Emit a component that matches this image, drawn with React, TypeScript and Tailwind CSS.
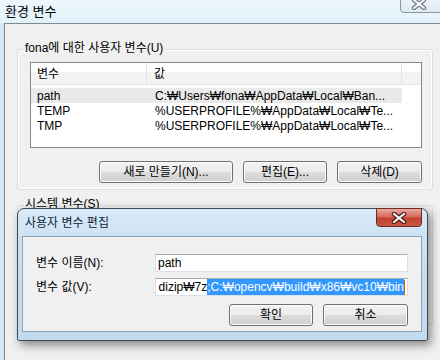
import React from 'react';

const btn =
  'flex items-center justify-center h-[22px] rounded-[3px] border border-[#707070] bg-[linear-gradient(to_bottom,#f2f2f2_0%,#ebebeb_50%,#dddddd_50%,#cfcfcf_100%)] shadow-[inset_0_0_0_1px_#fcfcfc]';

const rows = [
  { name: 'path', value: 'C:₩Users₩fona₩AppData₩Local₩Ban...', selected: true },
  { name: 'TEMP', value: '%USERPROFILE%₩AppData₩Local₩Te...', selected: false },
  { name: 'TMP', value: '%USERPROFILE%₩AppData₩Local₩Te...', selected: false },
];

const CloseX: React.FC<{ outline: string; fill: string }> = ({ outline, fill }) => (
  <svg width="16" height="12" viewBox="0 0 16 12">
    <path d="M3 2 L13 10 M13 2 L3 10" stroke={outline} strokeWidth="4.5" strokeLinecap="round" fill="none" />
    <path d="M3 2 L13 10 M13 2 L3 10" stroke={fill} strokeWidth="2.2" strokeLinecap="round" fill="none" />
  </svg>
);

const App: React.FC = () => {
  return (
    <div className="relative w-[440px] h-[360px] overflow-hidden bg-[#d6e9f6] text-[12px] leading-[16px] text-black font-['Liberation_Sans','Noto_Sans_CJK_KR',sans-serif]">
      {/* main window title */}
      <div className="h-[23px] pl-[5px] flex items-center bg-[linear-gradient(to_bottom,#eef8fd,#e2f1fa)] text-[13px]">
        환경 변수
      </div>
      <div className="absolute left-[400px] top-[-8px] w-[50px] h-[21px] rounded-bl-[4px] border border-[#8797a6] bg-[linear-gradient(to_bottom,#f4f8fb,#dfe9f1)] flex items-end justify-center pb-[2px] pr-[12px]">
        <CloseX outline="#6b7683" fill="#f4f6f8" />
      </div>

      {/* main window client */}
      <div className="ml-[4px] h-[337px] border-l border-t border-[#7d8a96] bg-[#f0f0f0]">
        {/* user variables group */}
        <div className="relative mt-[25px] ml-[12px] w-[416px] h-[141px] rounded-[3px] border border-[#d5dfe5] shadow-[inset_0_0_0_1px_#ffffff]">
          <div className="absolute left-[6px] top-[-10px] px-[1px] bg-[#f0f0f0]">fona에 대한 사용자 변수(U)</div>

          <div className="ml-[12px] mt-[12px] w-[392px] h-[86px] border border-[#828790] bg-white">
            <div className="flex h-[22px] border-b border-[#e5e5e5] bg-[linear-gradient(to_bottom,#ffffff_0%,#ffffff_45%,#f2f3f4_45%,#f2f3f4_100%)]">
              <div className="w-[116px] pl-[6px] flex items-center border-r border-[#e3e3e3]">변수</div>
              <div className="w-[255px] pl-[7px] flex items-center border-r border-[#e3e3e3]">값</div>
              <div className="flex-1" />
            </div>
            <div className="pt-[3px]">
              {rows.map((r) => (
                <div
                  key={r.name}
                  className={`flex h-[15px] w-[371px] items-center ${r.selected ? 'bg-[#eaeaea]' : ''}`}
                >
                  <div className="w-[117px] pl-[6px]">{r.name}</div>
                  <div className="pl-[7px] whitespace-nowrap">{r.value}</div>
                </div>
              ))}
            </div>
          </div>

          <div className="mt-[13px] mr-[10px] flex justify-end gap-[10px]">
            <div className={`${btn} w-[134px]`}>새로 만들기(N)...</div>
            <div className={`${btn} w-[84px]`}>편집(E)...</div>
            <div className={`${btn} w-[85px]`}>삭제(D)</div>
          </div>
        </div>

        {/* system variables group (covered) */}
        <div className="relative mt-[15px] ml-[12px] w-[416px] h-[120px] rounded-[3px] border border-[#d5dfe5]">
          <div className="absolute left-[6px] top-[-10px] px-[1px] bg-[#f0f0f0]">시스템 변수(S)</div>
        </div>
      </div>

      {/* edit dialog */}
      <div className="absolute left-[17px] top-[208px] w-[411px] h-[133px] rounded-t-[7px] rounded-b-[2px] border border-[#3f4a55] bg-[linear-gradient(to_bottom,#d9eaf7_0%,#c9dff1_30%,#c2daee_100%)] shadow-[3px_4px_10px_rgba(0,0,0,0.45)] flex flex-col">
        <div className="h-[27px] pl-[7px] flex items-center text-[#10243a]">사용자 변수 편집</div>
        <div className="absolute right-[5px] top-[-1px] w-[46px] h-[19px] rounded-b-[4px] border border-[#6e2a22] bg-[linear-gradient(to_bottom,#e9a99f_0%,#d46a5c_45%,#c2402f_55%,#c85a45_100%)] flex items-center justify-center">
          <CloseX outline="#4a1c16" fill="#ffffff" />
        </div>

        <div className="ml-[4px] mr-[5px] h-[96px] border border-[#8ea3b8] bg-[#f0f0f0]">
          <div className="pl-[13px] pt-[17px] flex items-center">
            <div className="w-[119px]">변수 이름(N):</div>
            <div className="w-[253px] h-[18px] border border-[#dbdfe6] border-t-[#abadb3] bg-white flex items-center pl-[2px]">
              path
            </div>
          </div>
          <div className="pl-[13px] pt-[6px] flex items-center">
            <div className="w-[119px]">변수 값(V):</div>
            <div className="w-[253px] h-[18px] border border-[#dbdfe6] border-t-[#abadb3] bg-white flex items-center justify-end pr-[2px]">
              <span className="whitespace-nowrap">dizip₩7z</span>
              <span className="whitespace-nowrap bg-[#3399ff] text-white">;C:₩opencv₩build₩x86₩vc10₩bin</span>
              <span className="w-[1px] h-[15px] bg-[#c86400] shrink-0" />
            </div>
          </div>
          <div className="mt-[8px] mr-[13px] flex justify-end gap-[10px]">
            <div className={`${btn} w-[84px] border-[#3c7fb1] shadow-[inset_0_0_0_1px_#5fd4f5]`}>확인</div>
            <div className={`${btn} w-[85px]`}>취소</div>
          </div>
        </div>
      </div>
    </div>
  );
};

export default App;
